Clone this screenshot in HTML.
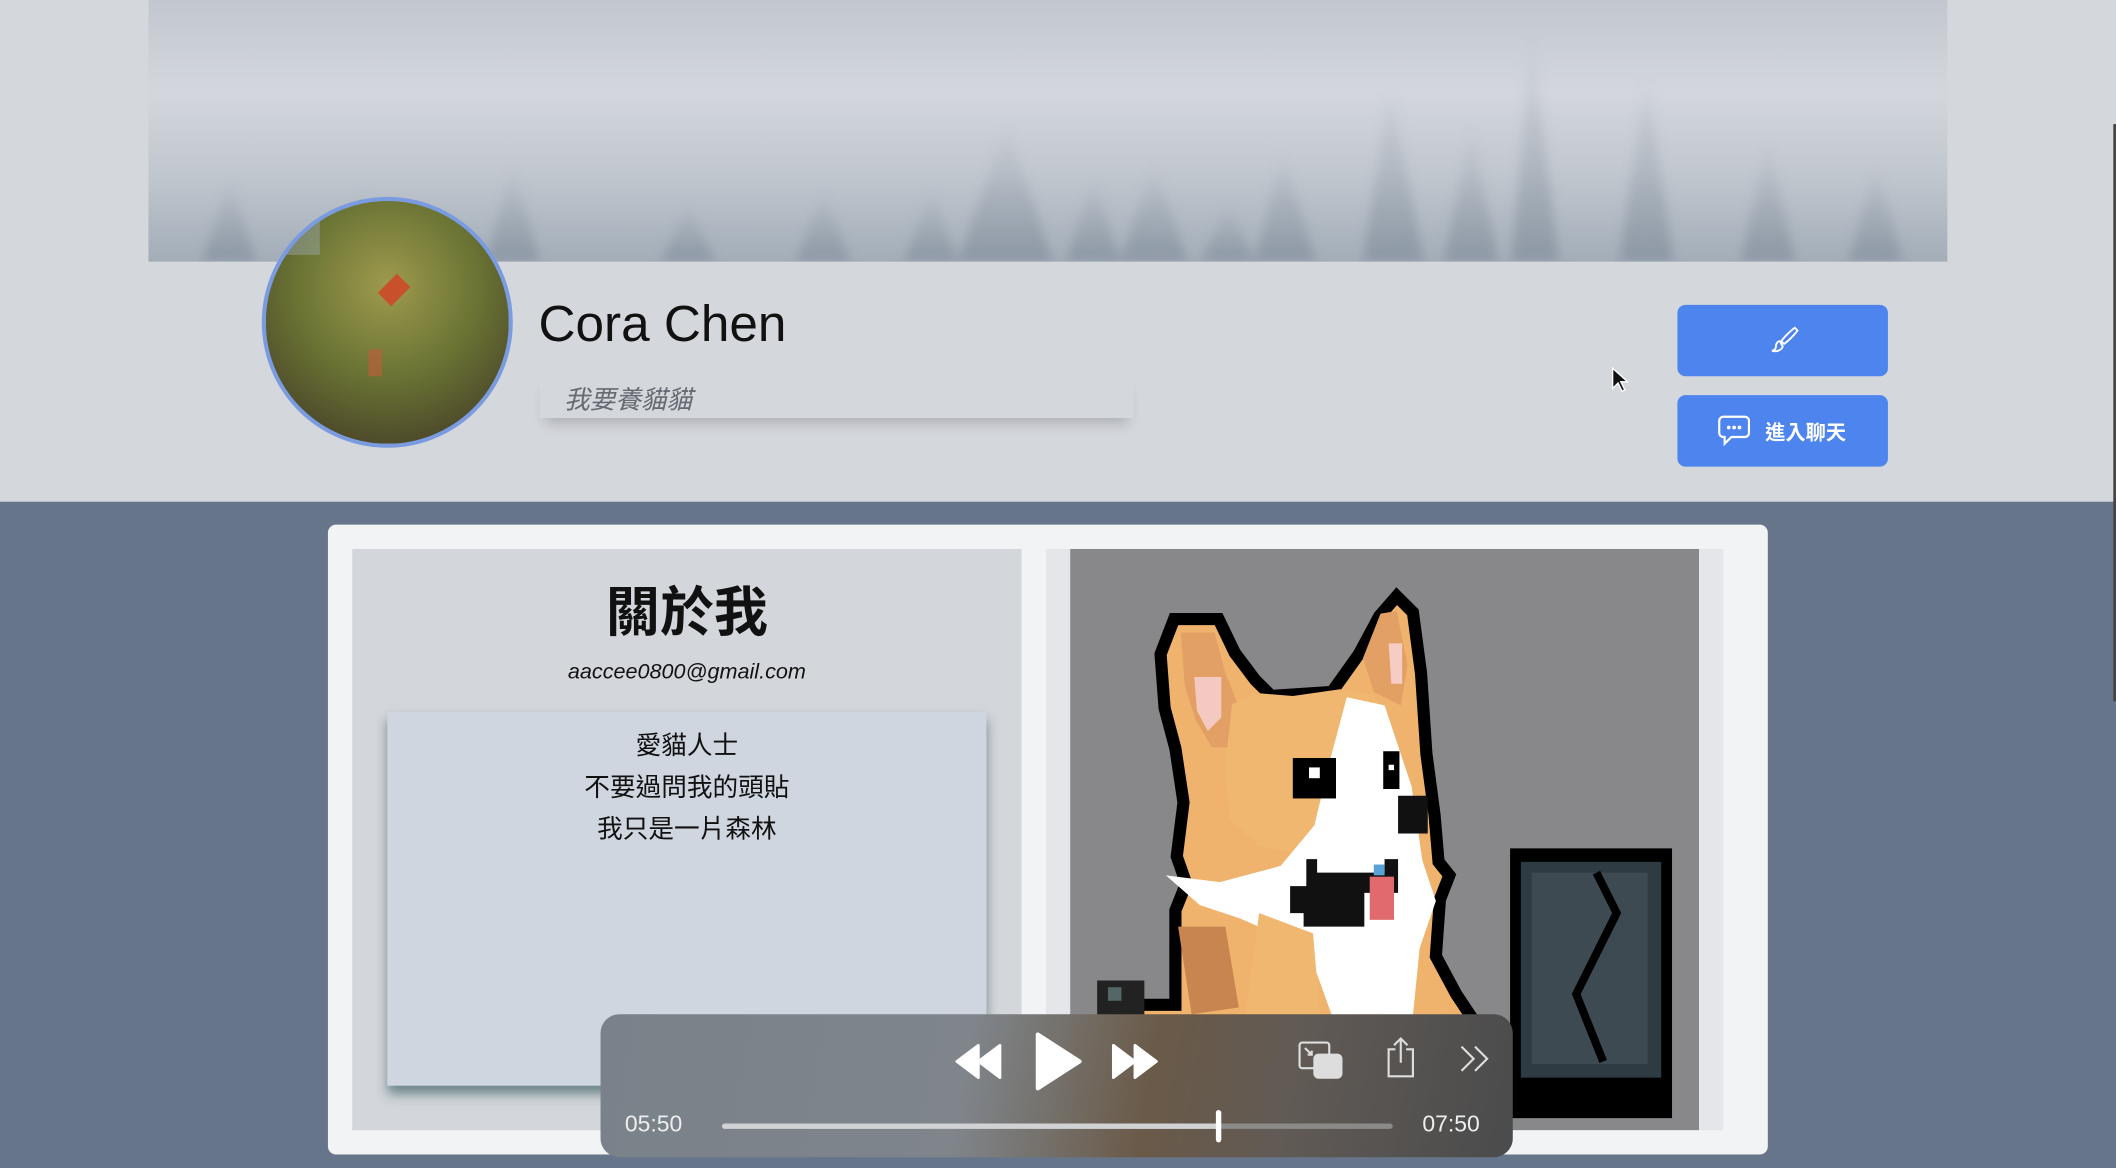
<!DOCTYPE html>
<html><head><meta charset="utf-8"><style>
html,body{margin:0;padding:0;width:2116px;height:1168px;overflow:hidden;background:#66758a}
#s{position:absolute;left:0;top:0;width:1568px;height:866px;transform:scale(1.34949,1.34873);transform-origin:0 0;font-family:"Liberation Sans","Noto Sans CJK TC",sans-serif}
.a{position:absolute}
</style></head><body><div id="s">
<div class="a" style="left:0;top:0;width:1568px;height:372px;background:#d4d7dc"></div>
<div class="a" style="left:110px;top:0;width:1333px;height:194px;overflow:hidden;background:linear-gradient(180deg,#c2c7cf 0%,#d3d7dd 35%,#c2c8cf 65%,#a3adb8 100%)">
<svg width="1333" height="194" style="position:absolute;left:0;top:0"><defs><linearGradient id="f" x1="0" y1="0" x2="0" y2="1"><stop offset="0" stop-color="#7f8b99" stop-opacity="0"/><stop offset="1" stop-color="#6f7c8b" stop-opacity=".45"/></linearGradient><filter id="b"><feGaussianBlur stdDeviation="4"/></filter></defs>
<g fill="url(#f)" filter="url(#b)">
<polygon points="1010,194 1025,20 1045,194"/><polygon points="900,194 920,60 945,194"/><polygon points="1090,194 1110,50 1130,194"/><polygon points="1180,194 1200,100 1220,194"/>
<polygon points="600,194 636,90 670,194"/><polygon points="680,194 700,130 720,194"/><polygon points="720,194 745,120 770,194"/><polygon points="560,194 580,140 600,194"/>
<polygon points="780,194 800,150 820,194"/><polygon points="820,194 840,110 865,194"/><polygon points="40,194 60,130 80,194"/><polygon points="140,194 160,140 180,194"/><polygon points="250,194 270,120 290,194"/><polygon points="380,194 400,150 420,194"/><polygon points="480,194 500,140 520,194"/><polygon points="1260,194 1280,120 1300,194"/><polygon points="960,194 980,90 1000,194"/>
</g></svg></div>
<div class="a" style="left:1566px;top:92px;width:2px;height:428px;background:#444"></div>
<div class="a" style="left:194px;top:146px;width:180px;height:180px;border-radius:50%;border:3px solid #7b9be0;background:radial-gradient(circle at 50% 35%,#9e9a4e,#6b7434 45%,#4d4a2a 80%);overflow:hidden">
<div class="a" style="left:88px;top:56px;width:14px;height:20px;background:#c8502a;transform:rotate(45deg)"></div>
<div class="a" style="left:76px;top:110px;width:10px;height:20px;background:#b8603a;opacity:.7"></div>
<div class="a" style="left:0;top:0;width:40px;height:40px;background:#a8b9d8;opacity:.35"></div></div>
<div class="a" style="left:399px;top:220px;font-size:38px;color:#111">Cora Chen</div>
<div class="a" style="left:400px;top:278px;width:440px;height:32px;box-shadow:0 8px 10px -4px rgba(0,0,0,.18)"></div>
<div class="a" style="left:418px;top:282px;font-size:19px;font-style:italic;color:#666b73">我要養貓貓</div>
<div class="a" style="left:1243px;top:226px;width:156px;height:53px;background:#4d84ee;border-radius:6px">
<svg class="a" style="left:66px;top:14px" width="24" height="24" viewBox="0 0 24 24" fill="none" stroke="#fff" stroke-width="1.4"><path d="M21 3c-3 2-8 7-10 10l2 2c3-2 8-7 10-10z"/><path d="M10 13c-2 0-3 2-3 4s-2 3-3 3c3 1 7 0 8-3z"/></svg></div>
<div class="a" style="left:1243px;top:293px;width:156px;height:53px;background:#4d84ee;border-radius:6px;color:#fff;font-size:15px;font-weight:bold">
<svg class="a" style="left:29px;top:14px" width="26" height="24" viewBox="0 0 26 24" fill="none" stroke="#fff" stroke-width="1.6"><path d="M5 2h16a3 3 0 0 1 3 3v9a3 3 0 0 1-3 3H11l-5 5v-5H5a3 3 0 0 1-3-3V5a3 3 0 0 1 3-3z"/><circle cx="9" cy="10" r=".6" fill="#fff"/><circle cx="13" cy="10" r=".6" fill="#fff"/><circle cx="17" cy="10" r=".6" fill="#fff"/></svg>
<span class="a" style="left:65px;top:17px">進入聊天</span></div>
<svg class="a" style="left:1194px;top:272px" width="14" height="20"><path d="M1 1v15l4-4 3 6 2-1-3-6h5z" fill="#111" stroke="#fff"/></svg>
<div class="a" style="left:243px;top:389px;width:1067px;height:467px;background:#f2f3f5;border-radius:6px"></div>
<div class="a" style="left:261px;top:407px;width:496px;height:431px;background:#d3d6db"></div>
<div class="a" style="left:261px;top:422px;width:496px;text-align:center;font-size:40px;font-weight:bold;color:#111">關於我</div>
<div class="a" style="left:261px;top:490px;width:496px;text-align:center;font-size:16px;font-style:italic;color:#111">aaccee0800@gmail.com</div>
<div class="a" style="left:287px;top:528px;width:444px;height:277px;background:#cfd6e0;box-shadow:0 6px 8px rgba(40,80,80,.6)"></div>
<div class="a" style="left:287px;top:538px;width:444px;text-align:center;font-size:19px;line-height:31px;color:#111">愛貓人士<br>不要過問我的頭貼<br>我只是一片森林</div>
<div class="a" style="left:775px;top:407px;width:502px;height:431px;background:#e4e6e9"></div>
<svg class="a" style="left:793px;top:407px" width="466" height="431" viewBox="0 0 466 431">
<rect width="466" height="431" fill="#88878a"/>
<path d="M77 52h33l12 25l15 20l12 12l45-3l20-28l15-28l13-15l12 12l6 45l4 60l6 45l3 35l8 10l-7 18l-3 42l15 28l12 18v100H20v-90l20-20h38v-70l8-20l-7-20l5-40l-6-40l-8-30l-3-40z" fill="#efb36d" stroke="#000" stroke-width="9" stroke-linejoin="miter"/>
<path d="M82 62h25l8 30l10 25l-5 30l-15 0l-12-20l-8-25z" fill="#e3a064"/>
<path d="M92 95h20v30l-10 10l-8-15z" fill="#f4c9c2"/>
<path d="M230 48l12-2l8 40l-5 30l-20-10l-8-25z" fill="#e3a064"/><path d="M236 70h10v30h-8z" fill="#f6cdc4"/>
<path d="M120 115l20-8l25 2l35-5l25 4l15 35l-10 30l-15 20l-5 30l-30 5l-40-8l-22-20l-3-40z" fill="#f0b771"/>
<path d="M205 110l28 6l20 60l8 55l10 30l-12 35l-5 50h-60l-18-50l-50-22l-30-10l-25-22l40 5l45 -12l25-30l12-50z" fill="#fff"/>
<path d="M140 270l40 15l5 60l-55 0z" fill="#f0b771"/>
<path d="M80 280h35l10 60l-35 5z" fill="#c98550"/>
<rect x="165" y="155" width="32" height="30" fill="#000"/><rect x="177" y="162" width="8" height="8" fill="#fff"/>
<rect x="232" y="150" width="12" height="28" fill="#000"/><rect x="236" y="160" width="4" height="4" fill="#fff"/>
<rect x="243" y="183" width="22" height="28" fill="#111"/>
<path d="M175 230h8v10h50v-10h10v25h-25v25h-45v-10h-10v-20h12z" fill="#111"/>
<rect x="222" y="243" width="18" height="32" fill="#e06a6e"/><rect x="225" y="234" width="8" height="8" fill="#5aa2d8"/>
<path d="M326 222h120v200h-120z" fill="#000"/><rect x="334" y="232" width="104" height="160" fill="#2e3b42"/><rect x="342" y="240" width="86" height="142" fill="#3d4a52"/>
<path d="M390 240l15 30l-30 60l20 50" stroke="#000" stroke-width="6" fill="none"/>
<path d="M20 320h35v30h-35z" fill="#222"/><rect x="28" y="325" width="10" height="10" fill="#566"/>
</svg>
<div class="a" style="left:445px;top:752px;width:676px;height:106px;border-radius:14px;background:linear-gradient(100deg,#79818a 0%,#7f858b 40%,#6a5a48 60%,#615a55 75%,#4a4b4c 100%);color:#eee;font-size:17px">
<svg class="a" style="left:262px;top:20px" width="40" height="30"><path d="M2 15 18 3v24zM18 15 34 3v24z" fill="#fff" stroke="#fff" stroke-linejoin="round" stroke-width="2"/></svg>
<svg class="a" style="left:320px;top:12px" width="40" height="46"><path d="M4 3v40l31-20z" fill="#fff" stroke="#fff" stroke-linejoin="round" stroke-width="3"/></svg>
<svg class="a" style="left:378px;top:20px" width="40" height="30"><path d="M2 3v24l16-12zM18 3v24l16-12z" fill="#fff" stroke="#fff" stroke-linejoin="round" stroke-width="2"/></svg>
<svg class="a" style="left:517px;top:20px" width="34" height="30" fill="none" stroke="#ddd" stroke-width="1.6"><rect x="1" y="1" width="22" height="19" rx="2"/><rect x="12" y="10" width="20" height="17" rx="3" fill="#ddd"/><path d="M5 5l5 5M7 10h3V7"/></svg>
<svg class="a" style="left:582px;top:16px" width="22" height="32" fill="none" stroke="#ddd" stroke-width="1.6"><path d="M7 10H2v20h18V10h-5M11 2v18M6 7l5-5 5 5"/></svg>
<svg class="a" style="left:636px;top:22px" width="24" height="22" fill="none" stroke="#ddd" stroke-width="1.6"><path d="M2 2l9 9-9 9M12 2l9 9-9 9"/></svg>
<span class="a" style="left:18px;top:72px">05:50</span>
<div class="a" style="left:90px;top:81px;width:497px;height:4px;border-radius:2px;background:#8a8a88"></div>
<div class="a" style="left:90px;top:81px;width:368px;height:4px;border-radius:2px;background:#d0d2d4"></div>
<div class="a" style="left:456px;top:71px;width:4px;height:24px;border-radius:2px;background:#fff"></div>
<span class="a" style="left:609px;top:72px">07:50</span>
</div>
</div></body></html>
